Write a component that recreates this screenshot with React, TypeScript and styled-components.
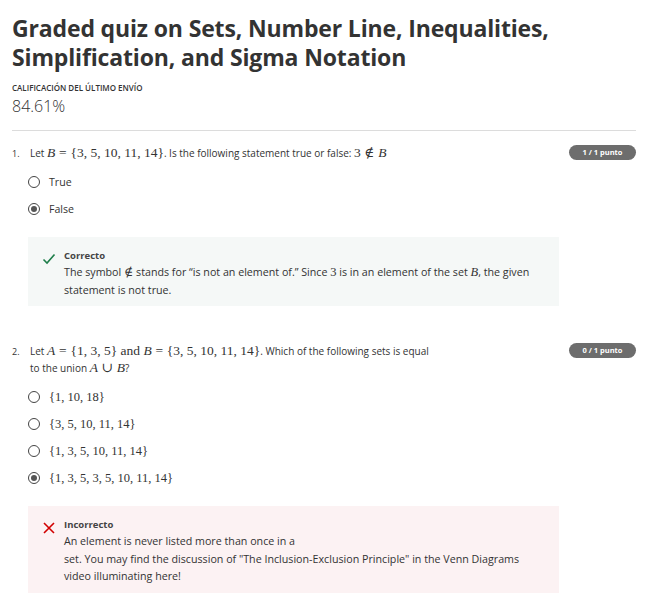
import React from "react";
import styled, { createGlobalStyle, css } from "styled-components";

const GlobalStyle = createGlobalStyle`
  html, body { margin: 0; padding: 0; background: #ffffff; }
  body { font-family: "Open Sans", "Noto Sans", sans-serif; color: #1f1f1f; }
  * { box-sizing: border-box; }
`;

const Page = styled.div`
  padding: 14px 29px 0 12px;
  width: 665px;
`;

const Title = styled.h1`
  margin: 0;
  font-size: 23px;
  line-height: 29px;
  font-weight: 700;
  color: #333333;
  letter-spacing: -0.15px;
`;

const Label = styled.div`
  margin-top: 10px;
  font-size: 8px;
  font-weight: 600;
  line-height: 12px;
  text-transform: uppercase;
  color: #333;
`;

const Score = styled.div`
  margin-top: 2px;
  font-size: 16px;
  font-weight: 300;
  line-height: 20px;
  color: #333;
`;

const Divider = styled.hr`
  margin: 14px 0 0;
  border: 0;
  border-top: 1px solid #dcdcdc;
`;

const Question = styled.section<{ $top: number }>`
  margin-top: ${(p) => p.$top}px;
`;

const Prompt = styled.div`
  display: flex;
  align-items: flex-start;
  font-size: 10px;
  line-height: 17px;
  color: #333;
`;

const Num = styled.span`
  width: 18px;
  flex: none;
  font-size: 9px;
`;

const PromptText = styled.div`
  flex: 1;
  max-width: 402px;
`;

const Badge = styled.span`
  flex: none;
  margin-left: auto;
  width: 67px;
  height: 15px;
  border-radius: 8px;
  background: #6d6d6d;
  color: #fff;
  font-size: 7.5px;
  font-weight: 700;
  display: flex;
  align-items: center;
  justify-content: center;
`;

const Math = styled.span<{ $size?: number }>`
  font-family: "Liberation Serif", "DejaVu Serif", serif;
  font-size: ${(p) => p.$size ?? 12.5}px;
  line-height: 1;
`;

const Var = styled.i<{ $size?: number }>`
  font-family: "Liberation Serif", "DejaVu Serif", serif;
  font-size: ${(p) => p.$size ?? 12.5}px;
  line-height: 1;
`;

const Rel = styled.span<{ $size?: number }>`
  font-family: "Liberation Serif", "DejaVu Serif", serif;
  font-size: ${(p) => p.$size ?? 12.5}px;
  line-height: 1;
  margin: 0 0.28em;
`;

const Options = styled.div`
  display: flex;
  flex-direction: column;
  gap: 9px;
  margin-top: 11px;
  padding-left: 16px;
`;

const Option = styled.label`
  display: flex;
  align-items: center;
  gap: 9px;
  height: 18px;
  font-size: 10.6px;
  color: #333;
`;

const Radio = styled.span<{ $checked?: boolean }>`
  width: 12px;
  height: 12px;
  border-radius: 50%;
  border: 1.5px solid #444;
  display: flex;
  align-items: center;
  justify-content: center;
  flex: none;
  ${(p) =>
    p.$checked &&
    css`
      &::after {
        content: "";
        width: 6px;
        height: 6px;
        border-radius: 50%;
        background: #555;
      }
    `}
`;

const Feedback = styled.div<{ $ok: boolean }>`
  margin: 19px 0 0 16px;
  width: 531px;
  background: ${(p) => (p.$ok ? "#f5f8f7" : "#fcf2f3")};
  padding: 11px 28px 7px 14px;
  display: flex;
  gap: 8px;
`;

const FbIcon = styled.div`
  width: 14px;
  flex: none;
  padding-top: 1px;
`;

const FbBody = styled.div`
  font-size: 10.7px;
  line-height: 17.5px;
  color: #333;
`;

const FbTitle = styled.div`
  font-size: 9.5px;
  font-weight: 700;
  color: #444;
  line-height: 16px;
`;

const Check = () => (
  <svg width="14" height="14" viewBox="0 0 14 14">
    <path d="M1.5 7.5 L5 11 L12.5 2.5" fill="none" stroke="#1e7e4a" strokeWidth="1.6" />
  </svg>
);

const Cross = () => (
  <svg width="14" height="14" viewBox="0 0 14 14">
    <path d="M2 2 L12 12 M12 2 L2 12" fill="none" stroke="#d10000" strokeWidth="1.6" />
  </svg>
);

const set = (items: string) => `{${items}}`;
const M = 13.5;

export default function App() {
  return (
    <Page>
      <GlobalStyle />
      <Title>
        Graded quiz on Sets, Number Line, Inequalities,
        <br />
        Simplification, and Sigma Notation
      </Title>
      <Label>Calificación del último envío</Label>
      <Score>84.61%</Score>
      <Divider />

      <Question $top={14}>
        <Prompt>
          <Num>1.</Num>
          <PromptText>
            Let <Var $size={M}>B</Var>
            <Rel $size={M}>=</Rel>
            <Math $size={M}>{set("3, 5, 10, 11, 14")}</Math>. Is the following statement true or false:{" "}
            <Math $size={M}>3</Math>
            <Rel $size={M}>∉</Rel>
            <Var $size={M}>B</Var>
          </PromptText>
          <Badge>1 / 1 punto</Badge>
        </Prompt>
        <Options>
          <Option>
            <Radio />
            True
          </Option>
          <Option>
            <Radio $checked />
            False
          </Option>
        </Options>
        <Feedback $ok>
          <FbIcon>
            <Check />
          </FbIcon>
          <FbBody>
            <FbTitle>Correcto</FbTitle>
            The symbol <Math>∉</Math> stands for “is not an element of.” Since <Math>3</Math> is in an element of the set{" "}
            <Var>B</Var>, the given statement is not true.
          </FbBody>
        </Feedback>
      </Question>

      <Question $top={37}>
        <Prompt>
          <Num>2.</Num>
          <PromptText>
            Let <Var $size={M}>A</Var>
            <Rel $size={M}>=</Rel>
            <Math $size={M}>{set("1, 3, 5")} and </Math>
            <Var $size={M}>B</Var>
            <Rel $size={M}>=</Rel>
            <Math $size={M}>{set("3, 5, 10, 11, 14")}</Math>. Which of the following sets is equal to the union{" "}
            <Var $size={M}>A</Var>
            <Rel $size={M}>∪</Rel>
            <Var $size={M}>B</Var>?
          </PromptText>
          <Badge>0 / 1 punto</Badge>
        </Prompt>
        <Options>
          <Option>
            <Radio />
            <Math>{set("1, 10, 18")}</Math>
          </Option>
          <Option>
            <Radio />
            <Math>{set("3, 5, 10, 11, 14")}</Math>
          </Option>
          <Option>
            <Radio />
            <Math>{set("1, 3, 5, 10, 11, 14")}</Math>
          </Option>
          <Option>
            <Radio $checked />
            <Math>{set("1, 3, 5, 3, 5, 10, 11, 14")}</Math>
          </Option>
        </Options>
        <Feedback $ok={false}>
          <FbIcon>
            <Cross />
          </FbIcon>
          <FbBody>
            <FbTitle>Incorrecto</FbTitle>
            An element is never listed more than once in a
            <br />
            set. You may find the discussion of "The Inclusion-Exclusion Principle" in the Venn Diagrams video
            illuminating here!
          </FbBody>
        </Feedback>
      </Question>
    </Page>
  );
}
